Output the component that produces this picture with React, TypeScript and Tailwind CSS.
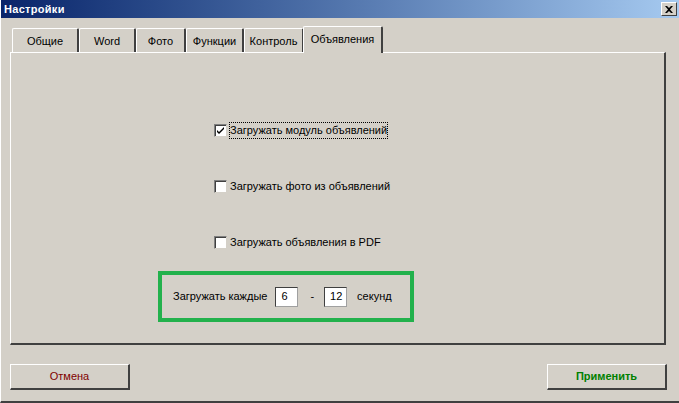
import React from "react";

const font = { fontFamily: '"Liberation Sans", Arial, sans-serif' };

function Tab({ label, w, selected }: { label: string; w: number; selected?: boolean }) {
  if (selected) {
    return (
      <div
        className="relative z-10 -mb-[1px] h-[27px] bg-[#d4d0c8] border-t border-l border-white border-r-2 border-r-[#404040] flex items-center justify-center text-[11px] text-black -ml-[1px] rounded-tl-[2px] rounded-tr-[2px]"
        style={{ width: w }}
      >
        <span className="-mt-[2px]">{label}</span>
      </div>
    );
  }
  return (
    <div
      className="h-[24px] bg-[#d4d0c8] border-t border-l border-white border-r-2 border-r-[#404040] flex items-center justify-center text-[11px] text-black rounded-tl-[2px] rounded-tr-[2px]"
      style={{ width: w }}
    >
      <span className="mt-[1px]">{label}</span>
    </div>
  );
}

function CheckBox({ checked, label, focused }: { checked?: boolean; label: string; focused?: boolean }) {
  return (
    <div className="flex items-center h-[17px]">
      <div className="w-[13px] h-[13px] bg-white border-t border-l border-[#808080] border-b border-r border-b-[#d4d0c8] border-r-[#d4d0c8] shadow-[inset_1px_1px_0_#404040] flex items-center justify-center">
        {checked && (
          <svg width="9" height="9" viewBox="0 0 9 9">
            <path d="M1 4 L3 6 L8 1 L8 3 L3 8 L1 6 Z" fill="#000" />
          </svg>
        )}
      </div>
      <div
        className={
          "ml-[2px] h-[17px] flex items-center px-[1px] text-[11px] text-black " +
          (focused ? "outline outline-1 outline-dotted outline-black -outline-offset-1" : "")
        }
      >
        {label}
      </div>
    </div>
  );
}

function NumBox({ value }: { value: string }) {
  return (
    <div className="w-[23px] h-[20px] bg-white border-t border-l border-[#404040] border-b border-r border-b-[#a0a0a0] border-r-[#a0a0a0] flex items-center pl-[5px] text-[11px] text-black">
      {value}
    </div>
  );
}

export default function App() {
  return (
    <div
      className="w-[679px] h-[403px] bg-[#d4d0c8] flex flex-col border-l border-l-white border-b-2 border-b-[#404040] overflow-hidden"
      style={font}
    >
      <div className="h-[18px] flex items-center justify-between bg-gradient-to-r from-[#0a246a] to-[#a6caf0]">
        <span className="ml-[3px] text-white font-bold text-[11px] tracking-[0.3px]">Настройки</span>
        <div className="mr-[2px] w-[16px] h-[14px] bg-[#d4d0c8] border-t border-l border-white border-b border-r border-b-[#404040] border-r-[#404040] flex items-center justify-center">
          <svg width="8" height="7" viewBox="0 0 8 7">
            <path d="M0 0 L2 0 L4 2 L6 0 L8 0 L5 3.5 L8 7 L6 7 L4 5 L2 7 L0 7 L3 3.5 Z" fill="#000" />
          </svg>
        </div>
      </div>

      <div className="mt-[8px] pl-[11px] flex items-end h-[26px]">
        <Tab label="Общие" w={67} />
        <Tab label="Word" w={57} />
        <Tab label="Фото" w={50} />
        <Tab label="Функции" w={58} />
        <Tab label="Контроль" w={60} />
        <Tab label="Объявления" w={80} selected />
      </div>

      <div className="ml-[9px] w-[656px] h-[293px] border-t border-l border-white border-r-2 border-b-2 border-r-[#404040] border-b-[#404040] flex flex-col">
        <div className="pl-[203px] pt-[69px] flex flex-col gap-[39px]">
          <CheckBox checked focused label="Загружать модуль объявлений" />
          <CheckBox label="Загружать фото из объявлений" />
          <CheckBox label="Загружать объявления в PDF" />
        </div>
        <div className="ml-[147px] mt-[20px] w-[256px] h-[51px] border-4 border-[#22b14c] flex items-center pl-[11px] text-[11px] text-black">
          <span>Загружать каждые</span>
          <div className="ml-[8px]">
            <NumBox value="6" />
          </div>
          <span className="ml-[12px]">-</span>
          <div className="ml-[10px]">
            <NumBox value="12" />
          </div>
          <span className="ml-[10px]">секунд</span>
        </div>
      </div>

      <div className="mt-[19px] px-[9px] flex justify-between">
        <div className="w-[120px] h-[26px] border-t border-l border-white border-r-2 border-b-2 border-r-[#404040] border-b-[#404040] flex items-center justify-center text-[11px] text-[#800000]">
          Отмена
        </div>
        <div className="mr-[3px] w-[120px] h-[26px] border-t border-l border-white border-r-2 border-b-2 border-r-[#404040] border-b-[#404040] flex items-center justify-center text-[11px] font-bold text-[#008000]">
          Применить
        </div>
      </div>
    </div>
  );
}
